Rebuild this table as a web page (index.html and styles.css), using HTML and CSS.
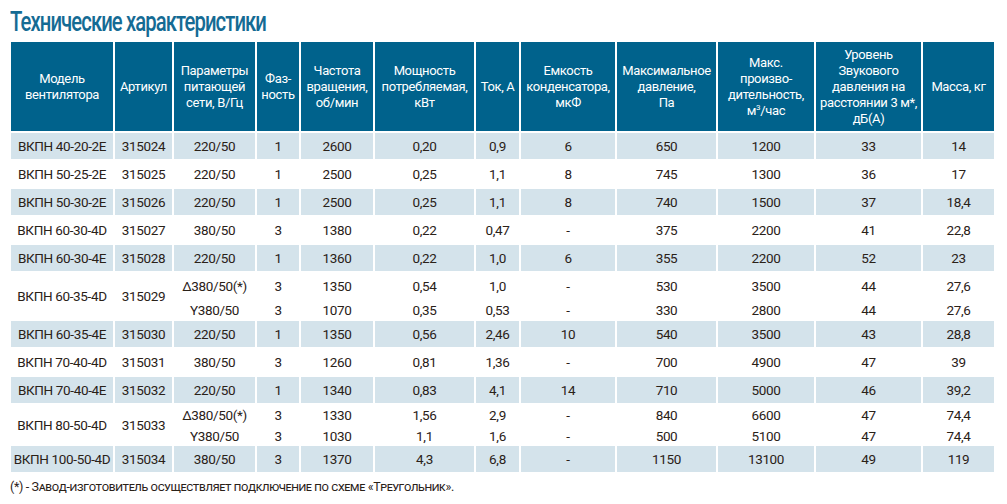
FILE: index.html
```html
<!DOCTYPE html>
<html lang="ru">
<head>
<meta charset="utf-8">
<title>Технические характеристики</title>
<link rel="stylesheet" href="styles.css">
</head>
<body>
<h1 class="title">Технические характеристики</h1>
<table class="specs">
  <colgroup>
    <col class="w1"><col class="w2"><col class="w3"><col class="w4"><col class="w5"><col class="w6">
    <col class="w7"><col class="w8"><col class="w9"><col class="w10"><col class="w11"><col class="w12">
  </colgroup>
  <thead>
    <tr class="head">
      <th>Модель<br>вентилятора</th>
      <th>Артикул</th>
      <th>Параметры<br>питающей<br>сети, В/Гц</th>
      <th>Фаз-<br>ность</th>
      <th>Частота<br>вращения,<br>об/мин</th>
      <th>Мощность<br>потребляемая,<br>кВт</th>
      <th>Ток, А</th>
      <th>Емкость<br>конденсатора,<br>мкФ</th>
      <th>Максимальное<br>давление,<br>Па</th>
      <th>Макс.<br>произво-<br>дительность,<br>м<sup>3</sup>/час</th>
      <th>Уровень<br>Звукового<br>давления на<br>расстоянии 3 м*,<br>дБ(А)</th>
      <th>Масса, кг</th>
    </tr>
  </thead>
  <tbody>
    <tr class="alt"><td>ВКПН 40-20-2Е</td><td>315024</td><td>220/50</td><td>1</td><td>2600</td><td>0,20</td><td>0,9</td><td>6</td><td>650</td><td>1200</td><td>33</td><td>14</td></tr>
    <tr><td>ВКПН 50-25-2Е</td><td>315025</td><td>220/50</td><td>1</td><td>2500</td><td>0,25</td><td>1,1</td><td>8</td><td>745</td><td>1300</td><td>36</td><td>17</td></tr>
    <tr class="alt"><td>ВКПН 50-30-2Е</td><td>315026</td><td>220/50</td><td>1</td><td>2500</td><td>0,25</td><td>1,1</td><td>8</td><td>740</td><td>1500</td><td>37</td><td>18,4</td></tr>
    <tr><td>ВКПН 60-30-4D</td><td>315027</td><td>380/50</td><td>3</td><td>1380</td><td>0,22</td><td>0,47</td><td>-</td><td>375</td><td>2200</td><td>41</td><td>22,8</td></tr>
    <tr class="alt"><td>ВКПН 60-30-4Е</td><td>315028</td><td>220/50</td><td>1</td><td>1360</td><td>0,22</td><td>1,0</td><td>6</td><td>355</td><td>2200</td><td>52</td><td>23</td></tr>
    <tr class="sub-a"><td rowspan="2">ВКПН 60-35-4D</td><td rowspan="2">315029</td><td>Δ380/50(*)</td><td>3</td><td>1350</td><td>0,54</td><td>1,0</td><td>-</td><td>530</td><td>3500</td><td>44</td><td>27,6</td></tr>
    <tr class="sub-b"><td>Y380/50</td><td>3</td><td>1070</td><td>0,35</td><td>0,53</td><td>-</td><td>330</td><td>2800</td><td>44</td><td>27,6</td></tr>
    <tr class="alt"><td>ВКПН 60-35-4Е</td><td>315030</td><td>220/50</td><td>1</td><td>1350</td><td>0,56</td><td>2,46</td><td>10</td><td>540</td><td>3500</td><td>43</td><td>28,8</td></tr>
    <tr><td>ВКПН 70-40-4D</td><td>315031</td><td>380/50</td><td>3</td><td>1260</td><td>0,81</td><td>1,36</td><td>-</td><td>700</td><td>4900</td><td>47</td><td>39</td></tr>
    <tr class="alt"><td>ВКПН 70-40-4Е</td><td>315032</td><td>220/50</td><td>1</td><td>1340</td><td>0,83</td><td>4,1</td><td>14</td><td>710</td><td>5000</td><td>46</td><td>39,2</td></tr>
    <tr class="sub-c"><td rowspan="2">ВКПН 80-50-4D</td><td rowspan="2">315033</td><td>Δ380/50(*)</td><td>3</td><td>1330</td><td>1,56</td><td>2,9</td><td>-</td><td>840</td><td>6600</td><td>47</td><td>74,4</td></tr>
    <tr class="sub-d"><td>Y380/50</td><td>3</td><td>1030</td><td>1,1</td><td>1,6</td><td>-</td><td>500</td><td>5100</td><td>47</td><td>74,4</td></tr>
    <tr class="alt"><td>ВКПН 100-50-4D</td><td>315034</td><td>380/50</td><td>3</td><td>1370</td><td>4,3</td><td>6,8</td><td>-</td><td>1150</td><td>13100</td><td>49</td><td>119</td></tr>
  </tbody>
</table>
<p class="note">(*) - Завод-изготовитель осуществляет подключение по схеме «Треугольник».</p>
</body>
</html>
```
FILE: styles.css
```css
html, body {
  margin: 0;
  padding: 0;
  background: #ffffff;
}
body {
  font-family: Roboto, "Open Sans", "Liberation Sans", sans-serif;
  color: #2a2118;
}
.title {
  margin: 0 0 0 10px;
  height: 40px;
  box-sizing: border-box;
  padding-top: 7px;
  font-family: Roboto, "Liberation Sans", sans-serif;
  font-weight: 500;
  font-size: 27px;
  line-height: 30px;
  color: #156b94;
  letter-spacing: -1.2px;
  white-space: nowrap;
  transform: scaleX(0.75);
  transform-origin: left top;
}
.specs {
  margin: 0 0 0 9px;
  border-collapse: separate;
  border-spacing: 2px;
  table-layout: fixed;
  width: 987px;
  font-size: 13.5px;
}
.w1 { width: 102px; }
.w2 { width: 57px; }
.w3 { width: 81px; }
.w4 { width: 42px; }
.w5 { width: 72px; }
.w6 { width: 99px; }
.w7 { width: 43px; }
.w8 { width: 94px; }
.w9 { width: 99px; }
.w10 { width: 96px; }
.w11 { width: 105px; }
.w12 { width: 71px; }
.specs th, .specs td {
  padding: 0;
  text-align: center;
  vertical-align: middle;
  white-space: nowrap;
  overflow: visible;
}
.head th {
  height: 89px;
  background: #00628c;
  color: #ffffff;
  font-weight: 400;
  font-size: 13px;
  line-height: 16px;
  letter-spacing: -0.35px;
}
.head sup {
  font-size: 8px;
  line-height: 0;
  vertical-align: 5px;
}
.specs td {
  height: 26px;
  line-height: 16px;
  letter-spacing: -0.35px;
}
.specs tr.alt td {
  background: #d4e3eb;
}
.specs tr.sub-a td { height: 26px; }
.specs tr.sub-b td { height: 18px; }
.specs tr.sub-c td { height: 20px; }
.specs tr.sub-d td { height: 17px; }
.note {
  margin: 5px 0 0 10px;
  font-size: 12.5px;
  line-height: 16px;
  font-variant: small-caps;
  letter-spacing: -0.35px;
}
```
